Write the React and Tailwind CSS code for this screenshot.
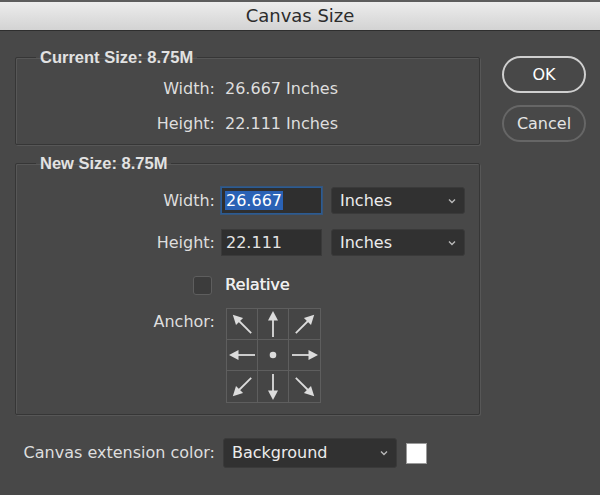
import React from 'react';

const font = { fontFamily: '"DejaVu Sans", Verdana, sans-serif' };

const Chevron = () => (
	<svg width="8" height="6" viewBox="0 0 8 6" className="shrink-0">
		<path d="M1 1.5 L4 4.5 L7 1.5" fill="none" stroke="#b8b8b8" strokeWidth="1.4" />
	</svg>
);

const Select = ({ value, className }) => (
	<div
		className={`flex items-center justify-between rounded-[3px] bg-[#313131] border border-[#3a3a3a] pl-[8px] pr-[8px] text-[16px] leading-[18px] text-[#ececec] ${className}`}
	>
		<span>{value}</span>
		<Chevron />
	</div>
);

// arrow drawn from cell centre towards a direction
const Arrow = ({ dir }) => {
	const angles = { n: -90, ne: -45, e: 0, se: 45, s: 90, sw: 135, w: 180, nw: -135 };
	if (dir === 'c') {
		return (
			<svg width="30" height="30" viewBox="0 0 30 30">
				<circle cx="15" cy="15" r="3.3" fill="#dcdcdc" />
			</svg>
		);
	}
	return (
		<svg width="30" height="30" viewBox="0 0 30 30">
			<g transform={`rotate(${angles[dir]} 15 15)`}>
				<line x1="2" y1="15" x2="21" y2="15" stroke="#dcdcdc" strokeWidth="1.8" />
				<polygon points="28,15 18.5,10 18.5,20" fill="#dcdcdc" />
			</g>
		</svg>
	);
};

const Group = ({ title, className, children }) => (
	<fieldset
		className={`border border-[#363636] shadow-[inset_1px_1px_0_#575757,1px_1px_0_#575757] rounded-[2px] px-0 ${className}`}
	>
		<legend className="ml-[20px] px-[4px] font-['Liberation_Sans',Arial,sans-serif] text-[16.5px] font-bold leading-[18px] text-[#e2e2e2]">
			{title}
		</legend>
		{children}
	</fieldset>
);

export default function App() {
	const cells = ['nw', 'n', 'ne', 'w', 'c', 'e', 'sw', 's', 'se'];

	return (
		<div style={font} className="w-[600px] h-[495px] bg-[#484848] flex flex-col overflow-hidden">
			{/* title bar */}
			<div className="h-[31px] shrink-0 border-t-2 border-t-[#5d5d5d] border-b border-b-[#2e2e2e] bg-gradient-to-b from-[#ededed] to-[#d3d3d3] flex items-center justify-center">
				<span className="text-[18px] leading-[20px] text-[#2c2c2c]">Canvas Size</span>
			</div>

			<div className="flex flex-row">
				{/* main column */}
				<div className="ml-[15px] w-[465px] flex flex-col">
					<Group title="Current Size: 8.75M" className="mt-[17px] pt-[13px] pb-[10px]">
						<div className="grid grid-cols-[199px_1fr] gap-y-[15px] text-[16px] leading-[20px] text-[#dedede]">
							<div className="text-right">Width:</div>
							<div className="pl-[10px]">26.667 Inches</div>
							<div className="text-right">Height:</div>
							<div className="pl-[10px]">22.111 Inches</div>
						</div>
					</Group>

					<Group title="New Size: 8.75M" className="mt-[9px] pt-[15px] pb-[11px]">
						<div className="flex flex-col text-[16px] leading-[18px] text-[#dedede]">
							<div className="flex items-center h-[27px]">
								<div className="w-[199px] text-right">Width:</div>
								<div className="ml-[6px] w-[101px] h-[27px] bg-[#2f2f2f] border border-[#2c5b92] shadow-[0_0_0_1px_#34557c] flex items-center pl-[3px]">
									<span className="bg-[#2a62b5] text-white px-[1px] leading-[19px]">26.667</span>
								</div>
								<Select value="Inches" className="ml-[9px] w-[134px] h-[27px]" />
							</div>

							<div className="flex items-center h-[27px] mt-[15px]">
								<div className="w-[199px] text-right">Height:</div>
								<div className="ml-[6px] w-[101px] h-[27px] bg-[#2f2f2f] border border-[#3a3a3a] flex items-center pl-[4px] text-[#e4e4e4]">
									22.111
								</div>
								<Select value="Inches" className="ml-[9px] w-[134px] h-[27px]" />
							</div>

							<div className="flex items-center h-[20px] mt-[19px]">
								<div className="w-[199px] flex justify-end pr-[3px]">
									<div className="w-[19px] h-[19px] rounded-[3px] bg-[#3c3c3c] border border-[#5e5e5e]" />
								</div>
								<span className="ml-[10px] text-[#eeeeee] [text-shadow:0.4px_0_0_#eeeeee]">Relative</span>
							</div>

							<div className="flex items-start mt-[13px]">
								<div className="w-[199px] text-right mt-[5px]">Anchor:</div>
								<div className="ml-[11px] grid grid-cols-3 border border-[#5e5e5e] bg-[#454545]">
									{cells.map((d, i) => (
										<div
											key={d}
											className={`w-[31px] h-[31px] flex items-center justify-center border-[#5e5e5e] ${
												i % 3 !== 2 ? 'border-r' : ''
											} ${i < 6 ? 'border-b' : ''}`}
										>
											<Arrow dir={d} />
										</div>
									))}
								</div>
							</div>
						</div>
					</Group>

					<div className="flex items-center mt-[23px] text-[16px] leading-[18px] text-[#dedede]">
						<div className="w-[200px] text-right whitespace-nowrap">Canvas extension color:</div>
						<Select value="Background" className="ml-[8px] w-[174px] h-[30px]" />
						<div className="ml-[9px] w-[21px] h-[21px] bg-white border border-[#9a9a9a]" />
					</div>
				</div>

				{/* buttons */}
				<div className="ml-[22px] mt-[25px] w-[84px] flex flex-col gap-[12px]">
					<button className="h-[37px] rounded-full border-2 border-[#cfcfcf] text-[16px] text-white bg-[#484848]">
						OK
					</button>
					<button className="h-[37px] rounded-full border-2 border-[#666666] text-[16px] text-[#e4e4e4] bg-[#484848]">
						Cancel
					</button>
				</div>
			</div>
		</div>
	);
}
